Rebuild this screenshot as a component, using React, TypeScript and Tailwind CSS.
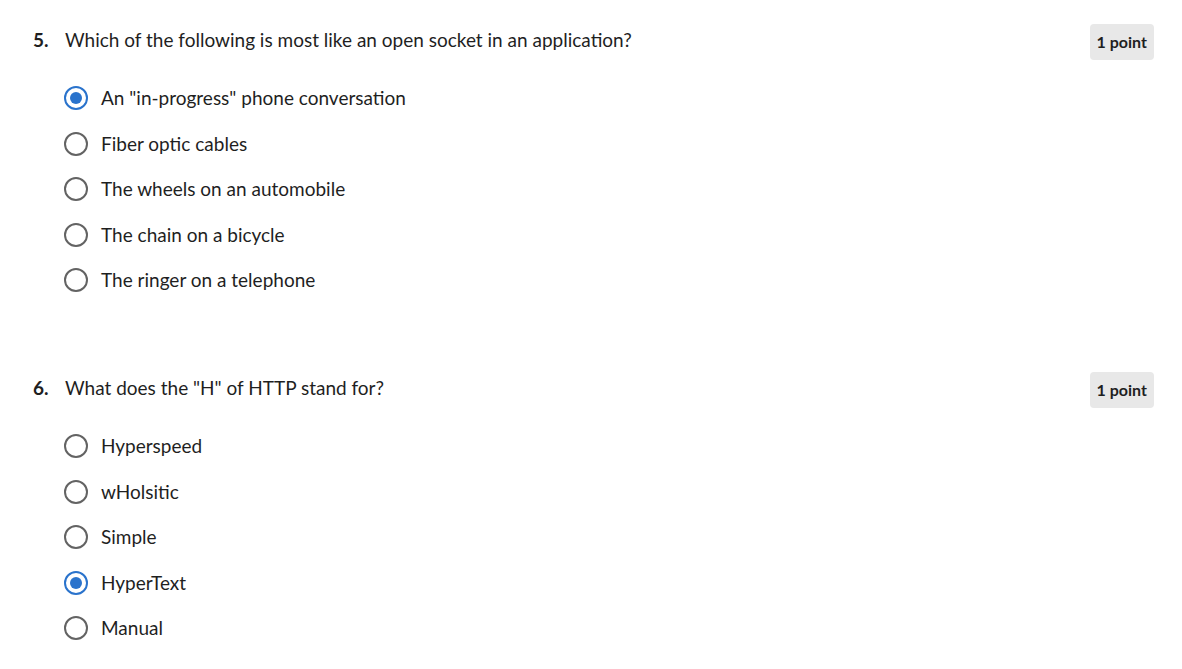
const questions = [
  {
    number: 5,
    text: "Which of the following is most like an open socket in an application?",
    options: [
      "An \"in-progress\" phone conversation",
      "Fiber optic cables",
      "The wheels on an automobile",
      "The chain on a bicycle",
      "The ringer on a telephone",
    ],
    selected: 0,
  },
  {
    number: 6,
    text: "What does the \"H\" of HTTP stand for?",
    options: ["Hyperspeed", "wHolsitic", "Simple", "HyperText", "Manual"],
    selected: 3,
  },
];

function Radio({ checked }: { checked: boolean }) {
  if (checked) {
    return (
      <span className="flex h-6 w-6 shrink-0 items-center justify-center rounded-full border-2 border-[#2a73cc]">
        <span className="h-3 w-3 rounded-full bg-[#2a73cc]" />
      </span>
    );
  }
  return <span className="h-6 w-6 shrink-0 rounded-full border-2 border-[#636363]" />;
}

export default function App() {
  return (
    <div className="min-h-[669px] bg-white font-['Lato','Open_Sans',sans-serif] text-[#1f1f1f]">
      <div className="flex flex-col gap-[80px] pl-[33px] pr-[28px] pt-[24px]">
        {questions.map((q) => (
          <div key={q.number} className="flex flex-col">
            <div className="flex items-start">
              <span className="w-[32px] pt-[4px] text-[19px] font-bold leading-[24px]">{q.number}.</span>
              <span className="flex-1 pt-[4px] text-[19px] leading-[24px]">{q.text}</span>
              <span className="rounded-[4px] bg-[#e8e8e8] px-[7px] py-[8px] text-[16px] font-bold leading-[20px]">
                1 point
              </span>
            </div>
            <div className="mt-[26px] flex flex-col gap-[21.5px] pl-[31px]">
              {q.options.map((option, i) => (
                <label key={option} className="flex h-[24px] items-center gap-[13px]">
                  <Radio checked={i === q.selected} />
                  <span className="text-[19px] leading-[24px]">{option}</span>
                </label>
              ))}
            </div>
          </div>
        ))}
      </div>
    </div>
  );
}
